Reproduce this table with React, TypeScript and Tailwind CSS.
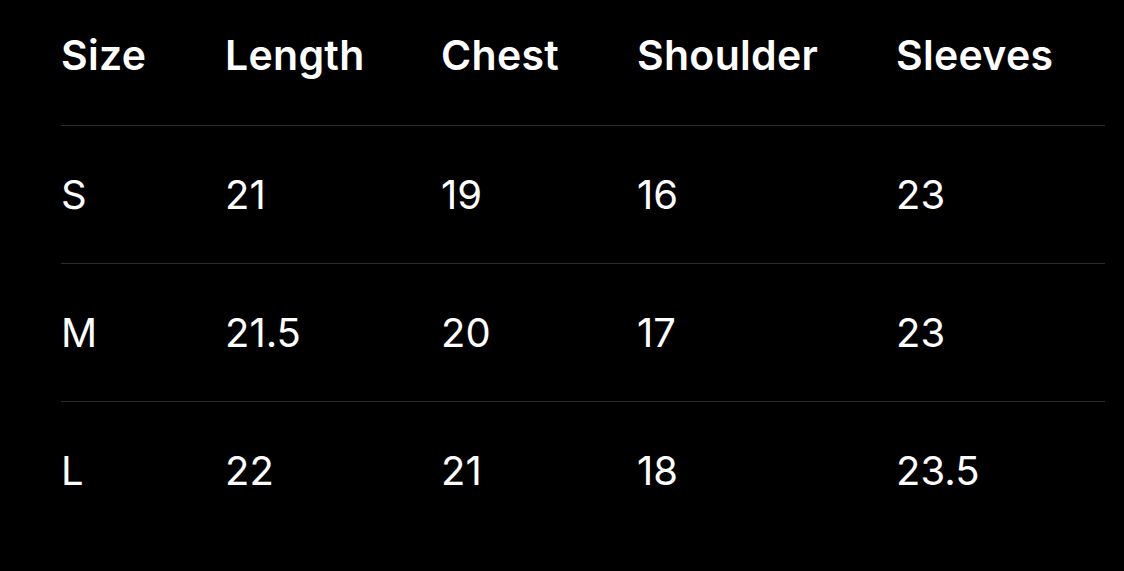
import React from 'react';

const SizeChart = () => {
  const headers = ['Size', 'Length', 'Chest', 'Shoulder', 'Sleeves'];
  const rows = [
    ['S', '21', '19', '16', '23'],
    ['M', '21.5', '20', '17', '23'],
    ['L', '22', '21', '18', '23.5'],
  ];

  return (
    <div className="min-h-[571px] w-full bg-black text-white font-['Inter',sans-serif]">
      <div className="ml-[61px] mr-[19px]">
        <div className="grid grid-cols-[164px_216px_196px_259px_1fr] h-[126px] pb-[13px] items-center border-b border-[#2b2b2b] text-[41px] font-semibold tracking-[0.3px]">
          {headers.map((h) => (
            <div key={h}>{h}</div>
          ))}
        </div>
        {rows.map((row, i) => (
          <div
            key={i}
            className={
              'grid grid-cols-[164px_216px_196px_259px_1fr] h-[138px] items-center text-[40px] ' +
              (i < rows.length - 1 ? 'border-b border-[#2b2b2b]' : '')
            }
          >
            {row.map((cell, j) => (
              <div key={j}>{cell}</div>
            ))}
          </div>
        ))}
      </div>
    </div>
  );
};

export default function App() {
  return <SizeChart />;
}
